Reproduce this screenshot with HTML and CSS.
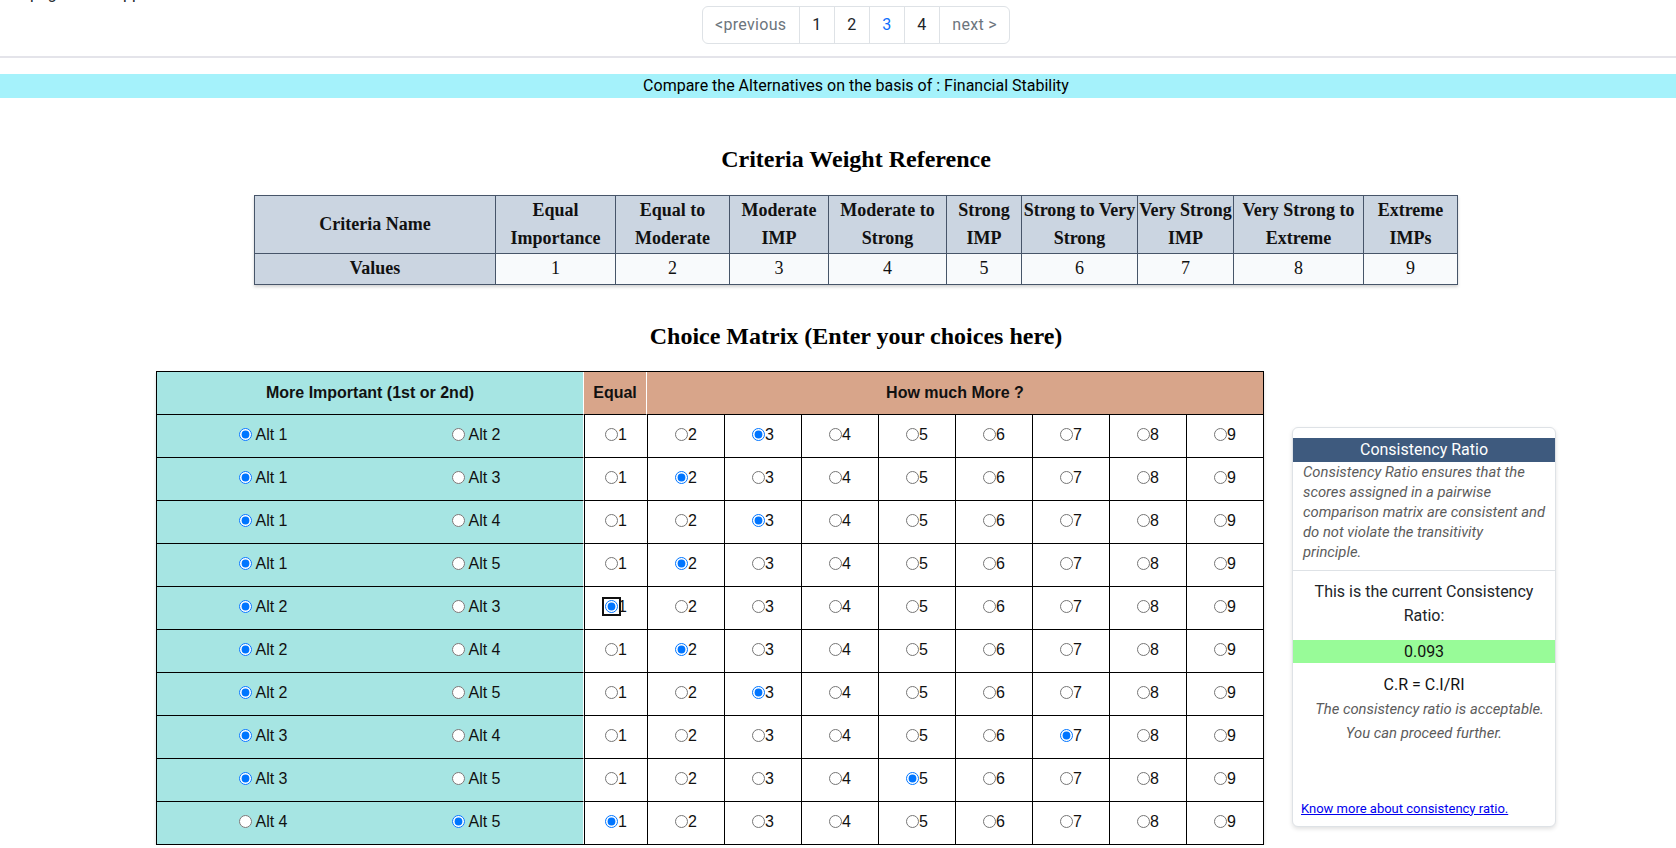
FILE: index.html
```html
<!DOCTYPE html>
<html lang="en">
<head>
<meta charset="utf-8">
<title>Pairwise comparison</title>
<link rel="stylesheet" href="styles.css">
</head>
<body>
<div class="crumb">page of the app</div>
<div class="main">
  <nav class="pager">
    <ul class="pagination">
      <li class="page-item"><a class="page-link muted" href="#">&lt;previous</a></li>
      <li class="page-item"><a class="page-link" href="#">1</a></li>
      <li class="page-item"><a class="page-link" href="#">2</a></li>
      <li class="page-item"><a class="page-link current" href="#">3</a></li>
      <li class="page-item"><a class="page-link" href="#">4</a></li>
      <li class="page-item"><a class="page-link muted" href="#">next &gt;</a></li>
    </ul>
  </nav>
</div>
<hr class="rule">
<div class="banner">Compare the Alternatives on the basis of : Financial Stability</div>
<div class="main">
  <h2 class="title">Criteria Weight Reference</h2>
  <table class="weights">
    <colgroup>
      <col class="w1"><col class="w2"><col class="w3"><col class="w4"><col class="w5">
      <col class="w6"><col class="w7"><col class="w8"><col class="w9"><col class="w10">
    </colgroup>
    <tr>
      <th>Criteria Name</th>
      <th>Equal Importance</th>
      <th>Equal to Moderate</th>
      <th>Moderate IMP</th>
      <th>Moderate to Strong</th>
      <th>Strong IMP</th>
      <th>Strong to Very Strong</th>
      <th>Very Strong IMP</th>
      <th>Very Strong to Extreme</th>
      <th>Extreme IMPs</th>
    </tr>
    <tr>
      <th>Values</th>
      <td>1</td><td>2</td><td>3</td><td>4</td><td>5</td><td>6</td><td>7</td><td>8</td><td>9</td>
    </tr>
  </table>

  <h2 class="title second">Choice Matrix (Enter your choices here)</h2>

  <div class="matrix-row">
    <table class="matrix">
      <colgroup>
        <col class="c-alt1"><col class="c-alt2"><col class="c-eq">
        <col class="c-n"><col class="c-n"><col class="c-n"><col class="c-n">
        <col class="c-n"><col class="c-n"><col class="c-n"><col class="c-n">
      </colgroup>
      <tr>
        <th class="head-more" colspan="2">More Important (1st or 2nd)</th>
        <th class="head-eq">Equal</th>
        <th class="head-how" colspan="8">How much More ?</th>
      </tr>
      <tr>
        <td class="alt"><label class="opt"><input type="radio" name="p1" checked>Alt 1</label></td>
        <td class="alt alt-b"><label class="opt"><input type="radio" name="p1">Alt 2</label></td>
        <td class="num"><label class="val"><input type="radio" name="v1">1</label></td>
        <td class="num"><label class="val"><input type="radio" name="v1">2</label></td>
        <td class="num"><label class="val"><input type="radio" name="v1" checked>3</label></td>
        <td class="num"><label class="val"><input type="radio" name="v1">4</label></td>
        <td class="num"><label class="val"><input type="radio" name="v1">5</label></td>
        <td class="num"><label class="val"><input type="radio" name="v1">6</label></td>
        <td class="num"><label class="val"><input type="radio" name="v1">7</label></td>
        <td class="num"><label class="val"><input type="radio" name="v1">8</label></td>
        <td class="num"><label class="val"><input type="radio" name="v1">9</label></td>
      </tr>
      <tr>
        <td class="alt"><label class="opt"><input type="radio" name="p2" checked>Alt 1</label></td>
        <td class="alt alt-b"><label class="opt"><input type="radio" name="p2">Alt 3</label></td>
        <td class="num"><label class="val"><input type="radio" name="v2">1</label></td>
        <td class="num"><label class="val"><input type="radio" name="v2" checked>2</label></td>
        <td class="num"><label class="val"><input type="radio" name="v2">3</label></td>
        <td class="num"><label class="val"><input type="radio" name="v2">4</label></td>
        <td class="num"><label class="val"><input type="radio" name="v2">5</label></td>
        <td class="num"><label class="val"><input type="radio" name="v2">6</label></td>
        <td class="num"><label class="val"><input type="radio" name="v2">7</label></td>
        <td class="num"><label class="val"><input type="radio" name="v2">8</label></td>
        <td class="num"><label class="val"><input type="radio" name="v2">9</label></td>
      </tr>
      <tr>
        <td class="alt"><label class="opt"><input type="radio" name="p3" checked>Alt 1</label></td>
        <td class="alt alt-b"><label class="opt"><input type="radio" name="p3">Alt 4</label></td>
        <td class="num"><label class="val"><input type="radio" name="v3">1</label></td>
        <td class="num"><label class="val"><input type="radio" name="v3">2</label></td>
        <td class="num"><label class="val"><input type="radio" name="v3" checked>3</label></td>
        <td class="num"><label class="val"><input type="radio" name="v3">4</label></td>
        <td class="num"><label class="val"><input type="radio" name="v3">5</label></td>
        <td class="num"><label class="val"><input type="radio" name="v3">6</label></td>
        <td class="num"><label class="val"><input type="radio" name="v3">7</label></td>
        <td class="num"><label class="val"><input type="radio" name="v3">8</label></td>
        <td class="num"><label class="val"><input type="radio" name="v3">9</label></td>
      </tr>
      <tr>
        <td class="alt"><label class="opt"><input type="radio" name="p4" checked>Alt 1</label></td>
        <td class="alt alt-b"><label class="opt"><input type="radio" name="p4">Alt 5</label></td>
        <td class="num"><label class="val"><input type="radio" name="v4">1</label></td>
        <td class="num"><label class="val"><input type="radio" name="v4" checked>2</label></td>
        <td class="num"><label class="val"><input type="radio" name="v4">3</label></td>
        <td class="num"><label class="val"><input type="radio" name="v4">4</label></td>
        <td class="num"><label class="val"><input type="radio" name="v4">5</label></td>
        <td class="num"><label class="val"><input type="radio" name="v4">6</label></td>
        <td class="num"><label class="val"><input type="radio" name="v4">7</label></td>
        <td class="num"><label class="val"><input type="radio" name="v4">8</label></td>
        <td class="num"><label class="val"><input type="radio" name="v4">9</label></td>
      </tr>
      <tr>
        <td class="alt"><label class="opt"><input type="radio" name="p5" checked>Alt 2</label></td>
        <td class="alt alt-b"><label class="opt"><input type="radio" name="p5">Alt 3</label></td>
        <td class="num"><label class="val"><input class="focus" type="radio" name="v5" checked>1</label></td>
        <td class="num"><label class="val"><input type="radio" name="v5">2</label></td>
        <td class="num"><label class="val"><input type="radio" name="v5">3</label></td>
        <td class="num"><label class="val"><input type="radio" name="v5">4</label></td>
        <td class="num"><label class="val"><input type="radio" name="v5">5</label></td>
        <td class="num"><label class="val"><input type="radio" name="v5">6</label></td>
        <td class="num"><label class="val"><input type="radio" name="v5">7</label></td>
        <td class="num"><label class="val"><input type="radio" name="v5">8</label></td>
        <td class="num"><label class="val"><input type="radio" name="v5">9</label></td>
      </tr>
      <tr>
        <td class="alt"><label class="opt"><input type="radio" name="p6" checked>Alt 2</label></td>
        <td class="alt alt-b"><label class="opt"><input type="radio" name="p6">Alt 4</label></td>
        <td class="num"><label class="val"><input type="radio" name="v6">1</label></td>
        <td class="num"><label class="val"><input type="radio" name="v6" checked>2</label></td>
        <td class="num"><label class="val"><input type="radio" name="v6">3</label></td>
        <td class="num"><label class="val"><input type="radio" name="v6">4</label></td>
        <td class="num"><label class="val"><input type="radio" name="v6">5</label></td>
        <td class="num"><label class="val"><input type="radio" name="v6">6</label></td>
        <td class="num"><label class="val"><input type="radio" name="v6">7</label></td>
        <td class="num"><label class="val"><input type="radio" name="v6">8</label></td>
        <td class="num"><label class="val"><input type="radio" name="v6">9</label></td>
      </tr>
      <tr>
        <td class="alt"><label class="opt"><input type="radio" name="p7" checked>Alt 2</label></td>
        <td class="alt alt-b"><label class="opt"><input type="radio" name="p7">Alt 5</label></td>
        <td class="num"><label class="val"><input type="radio" name="v7">1</label></td>
        <td class="num"><label class="val"><input type="radio" name="v7">2</label></td>
        <td class="num"><label class="val"><input type="radio" name="v7" checked>3</label></td>
        <td class="num"><label class="val"><input type="radio" name="v7">4</label></td>
        <td class="num"><label class="val"><input type="radio" name="v7">5</label></td>
        <td class="num"><label class="val"><input type="radio" name="v7">6</label></td>
        <td class="num"><label class="val"><input type="radio" name="v7">7</label></td>
        <td class="num"><label class="val"><input type="radio" name="v7">8</label></td>
        <td class="num"><label class="val"><input type="radio" name="v7">9</label></td>
      </tr>
      <tr>
        <td class="alt"><label class="opt"><input type="radio" name="p8" checked>Alt 3</label></td>
        <td class="alt alt-b"><label class="opt"><input type="radio" name="p8">Alt 4</label></td>
        <td class="num"><label class="val"><input type="radio" name="v8">1</label></td>
        <td class="num"><label class="val"><input type="radio" name="v8">2</label></td>
        <td class="num"><label class="val"><input type="radio" name="v8">3</label></td>
        <td class="num"><label class="val"><input type="radio" name="v8">4</label></td>
        <td class="num"><label class="val"><input type="radio" name="v8">5</label></td>
        <td class="num"><label class="val"><input type="radio" name="v8">6</label></td>
        <td class="num"><label class="val"><input type="radio" name="v8" checked>7</label></td>
        <td class="num"><label class="val"><input type="radio" name="v8">8</label></td>
        <td class="num"><label class="val"><input type="radio" name="v8">9</label></td>
      </tr>
      <tr>
        <td class="alt"><label class="opt"><input type="radio" name="p9" checked>Alt 3</label></td>
        <td class="alt alt-b"><label class="opt"><input type="radio" name="p9">Alt 5</label></td>
        <td class="num"><label class="val"><input type="radio" name="v9">1</label></td>
        <td class="num"><label class="val"><input type="radio" name="v9">2</label></td>
        <td class="num"><label class="val"><input type="radio" name="v9">3</label></td>
        <td class="num"><label class="val"><input type="radio" name="v9">4</label></td>
        <td class="num"><label class="val"><input type="radio" name="v9" checked>5</label></td>
        <td class="num"><label class="val"><input type="radio" name="v9">6</label></td>
        <td class="num"><label class="val"><input type="radio" name="v9">7</label></td>
        <td class="num"><label class="val"><input type="radio" name="v9">8</label></td>
        <td class="num"><label class="val"><input type="radio" name="v9">9</label></td>
      </tr>
      <tr>
        <td class="alt"><label class="opt"><input type="radio" name="p10">Alt 4</label></td>
        <td class="alt alt-b"><label class="opt"><input type="radio" name="p10" checked>Alt 5</label></td>
        <td class="num"><label class="val"><input type="radio" name="v10" checked>1</label></td>
        <td class="num"><label class="val"><input type="radio" name="v10">2</label></td>
        <td class="num"><label class="val"><input type="radio" name="v10">3</label></td>
        <td class="num"><label class="val"><input type="radio" name="v10">4</label></td>
        <td class="num"><label class="val"><input type="radio" name="v10">5</label></td>
        <td class="num"><label class="val"><input type="radio" name="v10">6</label></td>
        <td class="num"><label class="val"><input type="radio" name="v10">7</label></td>
        <td class="num"><label class="val"><input type="radio" name="v10">8</label></td>
        <td class="num"><label class="val"><input type="radio" name="v10">9</label></td>
      </tr>
    </table>

    <aside class="card">
      <div class="card-head">Consistency Ratio</div>
      <p class="card-desc">Consistency Ratio ensures that the scores assigned in a pairwise comparison matrix are consistent and do not violate the transitivity<br>principle.</p>
      <p class="card-current">This is the current Consistency Ratio:</p>
      <div class="card-value">0.093</div>
      <div class="card-formula">C.R = C.I/RI</div>
      <p class="card-note">The consistency ratio is acceptable.<br>You can proceed further.</p>
      <div class="card-link"><a href="#">Know more about consistency ratio.</a></div>
    </aside>
  </div>
</div>
</body>
</html>
```
FILE: styles.css
```css
* { box-sizing: border-box; }

body {
  margin: 0;
  font-family: Roboto, "Liberation Sans", sans-serif;
  font-size: 16px;
  line-height: 24px;
  color: #212529;
  background: #fff;
}

.crumb {
  margin-top: -18px;
  padding-left: 30px;
  height: 24px;
  white-space: nowrap;
}

.main { padding-left: 36px; }

/* pagination */
.pager { display: flex; justify-content: center; }
.pagination { display: flex; list-style: none; margin: 0; padding: 0; }
.page-link {
  display: block;
  padding: 6px 12.5px;
  border: 1px solid #dee2e6;
  margin-left: -1px;
  color: #212529;
  text-decoration: none;
  background: #fff;
}
.page-item:first-child .page-link { margin-left: 0; border-radius: 6px 0 0 6px; }
.page-item:last-child .page-link { border-radius: 0 6px 6px 0; }
.page-link.muted { color: #6c757d; letter-spacing: 0.3px; }
.page-link.current { color: #0d6efd; }

.rule {
  border: 0;
  border-top: 2px solid #e4e4ea;
  height: 0;
  margin: 12px 0 16px;
}

.banner {
  background: #a5f2fb;
  color: #000;
  text-align: center;
  padding-left: 36px;
  line-height: 24px;
}

.title {
  font-family: "Liberation Serif", "Times New Roman", serif;
  font-weight: 700;
  font-size: 24px;
  line-height: 29px;
  text-align: center;
  color: #000;
  margin: 47px 0 21px;
}
.title.second { margin: 37px 0 20px; }

/* criteria weight table */
.weights {
  margin: 0 auto;
  width: 1203px;
  table-layout: fixed;
  border-collapse: collapse;
  font-family: "Liberation Serif", "Times New Roman", serif;
  font-size: 18px;
  line-height: 27.5px;
  color: #111;
  box-shadow: 0 2px 3px rgba(0, 0, 0, 0.18);
}
.weights th, .weights td {
  border: 1px solid #475569;
  padding: 1px 0;
  text-align: center;
}
.weights th { background: #cbd5e1; font-weight: 700; }
.weights td { background: #f8fafc; font-weight: 400; }
.w1 { width: 241px; }
.w2 { width: 120px; }
.w3 { width: 114px; }
.w4 { width: 99px; }
.w5 { width: 118px; }
.w6 { width: 75px; }
.w7 { width: 116px; }
.w8 { width: 96px; }
.w9 { width: 130px; }
.w10 { width: 94px; }

/* choice matrix */
.matrix-row {
  display: flex;
  justify-content: center;
  align-items: flex-start;
  gap: 28px;
}
.matrix {
  width: 1108px;
  table-layout: fixed;
  border-collapse: separate;
  border-spacing: 0;
  border: 1px solid #000;
  font-family: "Liberation Sans", Arial, sans-serif;
  font-size: 16px;
  line-height: 20px;
  color: #111;
  box-shadow: 0 2px 3px rgba(0, 0, 0, 0.15);
}
.c-alt1 { width: 213px; }
.c-alt2 { width: 214px; }
.c-eq { width: 63px; }
.c-n { width: 77px; }

.matrix th, .matrix td {
  height: 43px;
  padding: 0;
  text-align: center;
  border-bottom: 1px solid #000;
}
.matrix tr:last-child td { border-bottom: 0; height: 42px; }
.matrix th { font-weight: 700; }
.head-more { background: #a6e5e3; border-right: 1px solid #fff; }
.head-eq { background: #d8a58a; border-right: 1px solid #fff; }
.head-how { background: #d8a58a; }

.alt { background: #a6e5e3; }
.alt-b { border-right: 1px solid #fff; }
.num { border-left: 1px solid #000; background: #fff; }

.opt, .val { display: inline-flex; align-items: center; }
.opt input { margin: 0 3px 0 0; }
.val input { margin: 0; }
.focus {
  outline: 2px solid #101010;
  outline-offset: 1px;
  border-radius: 4px;
}

/* consistency card */
.card {
  width: 264px;
  height: 400px;
  margin-top: 56px;
  padding-top: 10px;
  border: 1px solid #dee2e6;
  border-radius: 6px;
  background: #fff;
  box-shadow: 0 2px 4px rgba(0, 0, 0, 0.12);
  display: flex;
  flex-direction: column;
}
.card-head {
  background: #3e5a7e;
  color: #fff;
  text-align: center;
  line-height: 24px;
}
.card-desc {
  margin: 0;
  padding: 0 4px 8px 10px;
  font-style: italic;
  font-size: 14.8px;
  line-height: 20px;
  color: #5c5c5c;
  border-bottom: 1px solid #dee2e6;
}
.card-current {
  margin: 9px 0 0;
  padding: 0 8px;
  text-align: center;
}
.card-value {
  margin-top: 12px;
  background: #98fb98;
  color: #111;
  text-align: center;
  line-height: 23px;
}
.card-formula {
  margin-top: 10px;
  text-align: center;
  color: #111;
}
.card-note {
  margin: 0;
  text-align: center;
  text-indent: 11px;
  font-style: italic;
  font-size: 14.8px;
  line-height: 24px;
  color: #5c5c5c;
}
.card-link {
  margin-top: auto;
  padding: 0 8px 7px;
  font-size: 13px;
  line-height: 20px;
}
.card-link a { color: #0000ee; text-decoration: underline; }
```
